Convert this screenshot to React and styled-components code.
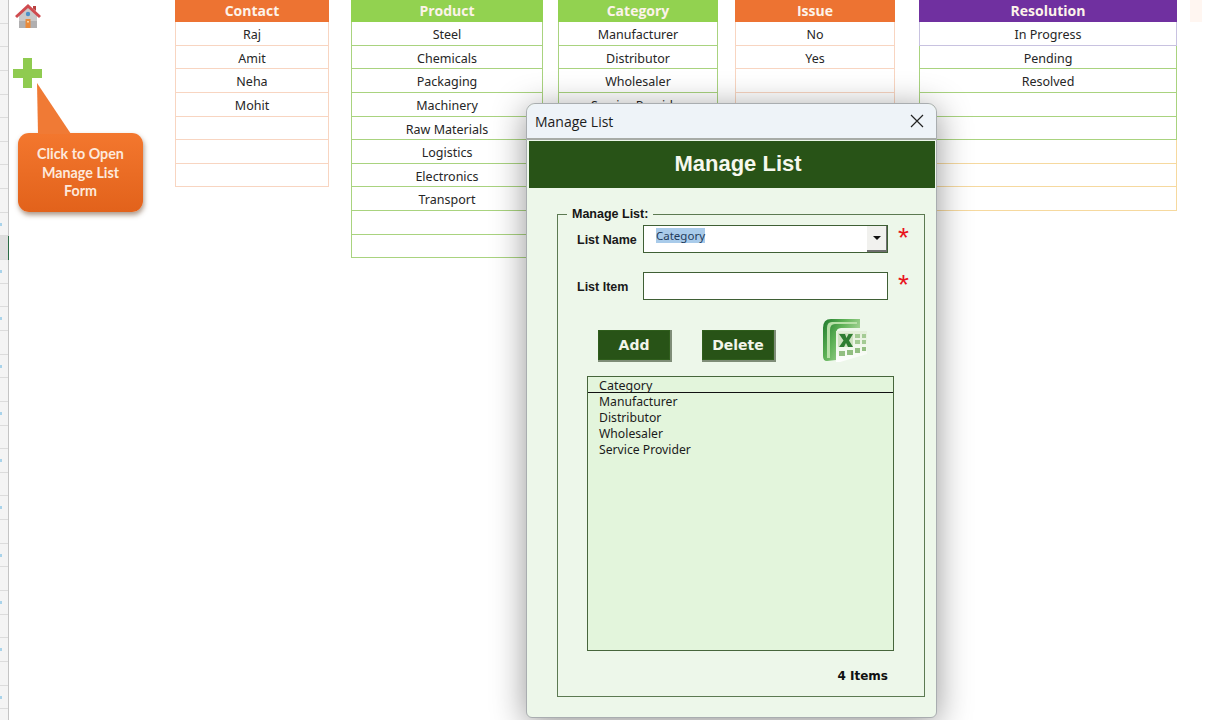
import React from "react";
import styled, { createGlobalStyle } from "styled-components";

const GlobalStyle = createGlobalStyle`
  html, body {
    margin: 0;
    background: #fff;
    overflow: hidden;
  }
`;

const ROW_H = 23.65;

const PEACH = "#f8d5c1";
const GREEN = "#a9d37f";
const LAVENDER = "#c8c2e0";
const SAND = "#f6d99f";

const tables = [
  {
    title: "Contact",
    head: "#ed7332",
    width: 154,
    left: 0,
    line: PEACH,
    items: ["Raj", "Amit", "Neha", "Mohit", "", "", ""],
  },
  {
    title: "Product",
    head: "#92d250",
    width: 192,
    left: 22,
    line: GREEN,
    items: ["Steel", "Chemicals", "Packaging", "Machinery", "Raw Materials", "Logistics", "Electronics", "Transport", "", ""],
  },
  {
    title: "Category",
    head: "#92d250",
    width: 160,
    left: 15,
    line: GREEN,
    items: ["Manufacturer", "Distributor", "Wholesaler", "Service Provider", "", "", "", ""],
  },
  {
    title: "Issue",
    head: "#ed7332",
    width: 160,
    left: 17,
    line: PEACH,
    items: ["No", "Yes", "", "", "", "", "", ""],
  },
  {
    title: "Resolution",
    head: "#7030a0",
    width: 258,
    left: 24,
    line: GREEN,
    lines: [LAVENDER, GREEN, GREEN, GREEN, GREEN, SAND, SAND, SAND],
    items: ["In Progress", "Pending", "Resolved", "", "", "", "", ""],
  },
];

const Page = styled.div`
  position: relative;
  display: flex;
  width: 1210px;
  height: 720px;
  overflow: hidden;
  background: #fff;
`;

const Gutter = styled.div`
  width: 8px;
  flex: none;
  background: #f4f4f4;
  border-right: 1px solid #c4c4c4;
`;

const GutterCell = styled.div`
  position: relative;
  height: ${ROW_H}px;
  box-sizing: border-box;
  border-bottom: 1px solid #dcdcdc;
  background: ${(p) => (p.$selected ? "#dedede" : "transparent")};
  box-shadow: ${(p) => (p.$selected ? "1px 0 0 #2b6b45" : "none")};
  &::after {
    content: "";
    display: ${(p) => (p.$tick ? "block" : "none")};
    position: absolute;
    left: 0;
    top: 10px;
    width: 2px;
    height: 3px;
    background: #a9d3ea;
  }
`;

const Tools = styled.div`
  width: 166px;
  flex: none;
  display: flex;
  flex-direction: column;
  align-items: flex-start;
`;

const HomeIcon = styled.svg`
  width: 28px;
  height: 26px;
  margin: 3px 0 0 5px;
`;

const PlusIcon = styled.svg`
  width: 31px;
  height: 32px;
  margin: 28px 0 0 3px;
`;

const Callout = styled.div`
  position: relative;
  width: 125px;
  height: 79px;
  margin: 44px 0 0 9px;
  box-sizing: border-box;
  padding-top: 12px;
  border-radius: 11px;
  background: linear-gradient(180deg, #f3772e 0%, #e2621b 100%);
  box-shadow: 1px 3px 5px rgba(90, 50, 20, 0.5);
  color: #fde9dc;
  font: 700 14.3px/18.7px Lato, "Liberation Sans", sans-serif;
  text-align: center;
`;

const CalloutTail = styled.svg`
  position: absolute;
  left: 18px;
  top: -50px;
  width: 36px;
  height: 51px;
`;

const Sheet = styled.div`
  display: flex;
  align-items: flex-start;
`;

const Column = styled.div`
  width: ${(p) => p.$width}px;
  margin-left: ${(p) => p.$left}px;
  flex: none;
`;

const ColumnHead = styled.div`
  height: 22px;
  background: ${(p) => p.$color};
  color: #fdf3ea;
  font: 700 14px/22px "Open Sans", "Liberation Sans", sans-serif;
  text-align: center;
`;

const Cell = styled.div`
  height: ${ROW_H}px;
  box-sizing: border-box;
  border: 1px solid ${(p) => p.$line};
  border-top: 0;
  color: #262626;
  font: 400 12.5px/25px "Noto Sans", "Liberation Sans", sans-serif;
  text-align: center;
`;

const GhostHead = styled.div`
  width: 12px;
  height: 22px;
  margin-left: 13px;
  background: #fff6f1;
`;

const Dialog = styled.div`
  position: absolute;
  left: 526px;
  top: 103px;
  width: 411px;
  height: 615px;
  box-sizing: border-box;
  display: flex;
  flex-direction: column;
  border: 1px solid #a9adb0;
  border-radius: 9px 9px 6px 6px;
  background: #edf7ea;
  box-shadow: 0 6px 34px rgba(0, 0, 0, 0.42);
`;

const TitleBar = styled.div`
  height: 34px;
  flex: none;
  display: flex;
  align-items: center;
  justify-content: space-between;
  padding: 0 12px 0 8px;
  border-radius: 9px 9px 0 0;
  border-bottom: 2px solid #a7aba7;
  background: #eef3f8;
  color: #1c1c1c;
  font: 400 14px "Open Sans", "Liberation Sans", sans-serif;
`;

const CloseIcon = styled.svg`
  width: 14px;
  height: 14px;
`;

const Body = styled.div`
  flex: 1;
  display: flex;
  flex-direction: column;
  margin: 1px 1px 0 2px;
  min-height: 0;
`;

const Banner = styled.div`
  height: 47px;
  flex: none;
  padding-left: 12px;
  background: #285317;
  color: #f6f8ee;
  font: 700 22px/46px "Liberation Sans", Arial, sans-serif;
  text-align: center;
`;

const Group = styled.fieldset`
  height: 490px;
  box-sizing: border-box;
  margin: 19px 10px 0 28px;
  padding: 4px 0 0 19px;
  border: 1px solid #5c7a52;
`;

const GroupTitle = styled.legend`
  margin-left: -10px;
  padding: 0 5px 0 5px;
  color: #151515;
  font: 700 12.5px/14px "Liberation Sans", Arial, sans-serif;
`;

const FieldRow = styled.div`
  display: grid;
  grid-template-columns: 66px 245px 20px;
  align-items: center;
  height: 28px;
  margin-bottom: ${(p) => p.$gap}px;
`;

const FieldLabel = styled.label`
  padding-top: 2px;
  color: #1a1a1a;
  font: 700 12.5px "Liberation Sans", Arial, sans-serif;
  white-space: nowrap;
`;

const Box = styled.div`
  position: relative;
  height: 28px;
  box-sizing: border-box;
  border: 1px solid #3f5f35;
  background: #fff;
  padding: 2px 0 0 12px;
`;

const Selected = styled.span`
  display: inline-block;
  vertical-align: top;
  background: #a9cbea;
  color: #1f3b5c;
  font: 400 11.5px/15px "Noto Sans", "Liberation Sans", sans-serif;
`;

const DropButton = styled.div`
  position: absolute;
  right: 0;
  top: 0;
  bottom: 0;
  width: 20px;
  display: flex;
  align-items: center;
  justify-content: center;
  box-sizing: border-box;
  border-right: 1px solid #6e6e6e;
  border-bottom: 2px solid #6e6e6e;
  background: #f1f1ee;
  &::after {
    content: "";
    border-left: 4px solid transparent;
    border-right: 4px solid transparent;
    border-top: 4px solid #111;
  }
`;

const Required = styled.span`
  align-self: start;
  justify-self: end;
  margin: -1px -1px 0 0;
  height: 24px;
  color: #e8141c;
  font: 400 28px/28px "Liberation Sans", Arial, sans-serif;
`;

const Actions = styled.div`
  display: flex;
  align-items: flex-start;
  height: 76px;
  padding-left: 21px;
`;

const ActionButton = styled.button`
  width: 74px;
  height: 32px;
  margin: 30px 30px 0 0;
  padding: 0;
  box-sizing: border-box;
  border: 0;
  border-right: 2px solid #7f8d78;
  border-bottom: 2px solid #7f8d78;
  background: #285317;
  box-shadow: inset 0 0 0 1px #2f5d1c;
  color: #f2f5ea;
  font: 700 14px "DejaVu Sans", Verdana, sans-serif;
`;

const ExcelIcon = styled.svg`
  width: 46px;
  height: 46px;
  margin: 18px 0 0 16px;
`;

const ListBox = styled.div`
  width: 307px;
  height: 275px;
  box-sizing: border-box;
  margin-left: 10px;
  border: 1px solid #47663c;
  background: #e3f5dc;
  color: #1b1b1b;
  font: 400 12.2px/16px "Noto Sans", "Liberation Sans", sans-serif;
`;

const ListHead = styled.div`
  height: 15px;
  margin-bottom: 1px;
  padding-left: 11px;
  border-bottom: 1px solid #111;
  font-size: 12.5px;
  line-height: 17px;
`;

const ListItem = styled.div`
  height: 16px;
  padding-left: 11px;
`;

const ItemCount = styled.div`
  margin: 17px 36px 0 0;
  color: #111;
  font: 700 12px/16px "DejaVu Sans", Verdana, sans-serif;
  text-align: right;
`;

const House = () => (
  <HomeIcon viewBox="0 0 28 26">
    <path d="M5 12 L14 4 L23 12 V25 H5 Z" fill="#c9c8c8" />
    <path d="M5 18 H23 V25 H5 Z" fill="#b0afb0" />
    <path d="M1 13 L14 1 L27 13 L25 15 L14 5 L3 15 Z" fill="#cf4b4f" />
    <path d="M19 3 H22 V8 L19 5.5 Z" fill="#b8403f" />
    <circle cx="14" cy="11" r="2.2" fill="#4a90c8" />
    <rect x="11.5" y="16" width="5" height="9" fill="#e98a3a" />
    <rect x="13" y="18" width="2" height="1.5" fill="#f9d8a8" />
  </HomeIcon>
);

const Plus = () => (
  <PlusIcon viewBox="0 0 31 32">
    <path d="M11 1 H20 V12 H30 V21 H20 V31 H11 V21 H1 V12 H11 Z" fill="#8fcb50" />
  </PlusIcon>
);

const Excel = () => (
  <ExcelIcon viewBox="0 0 46 46">
    <defs>
      <linearGradient id="xlBody" x1="0" y1="0" x2="1" y2="0.6">
        <stop offset="0" stopColor="#1f7a2c" />
        <stop offset="0.45" stopColor="#5fb257" />
        <stop offset="1" stopColor="#bfe0ae" />
      </linearGradient>
      <linearGradient id="xlSheet" x1="0" y1="0" x2="0" y2="1">
        <stop offset="0" stopColor="#e3efd9" />
        <stop offset="1" stopColor="#ffffff" />
      </linearGradient>
    </defs>
    <path d="M9 1 H38 V10 H19 Q14 10 14 16 V42 L5 43 Q1 43 1 38 V10 Q1 1 9 1 Z" fill="url(#xlBody)" />
    <path d="M5 10 Q5 4 10 4 H35 V6 H13 Q8 6 8 12 V40 H5 Z" fill="#b8e0a8" />
    <path d="M14 13 H45 V36 L18 44 H14 Z" fill="url(#xlSheet)" />
    <path d="M16 15 H31 V29 H16 Z" fill="#cfe2c1" />
    <path d="M17 16 H23 L24.5 20 L26.5 16 H31 L27 22.5 L31 29 H26 L24 25 L22 29 H17 L21.5 22.5 Z" fill="#2f7d32" />
    <path d="M33 16 H38 V20 H33 Z M40 16 H44 V20 H40 Z M33 22 H38 V26 H33 Z M40 22 H44 V26 H40 Z" fill="#a4cb94" />
    <path d="M17 33 H23 V38 H17 Z M25 32 H31 V37 H25 Z M33 30 H38 V35 H33 Z M40 29 H44 V33 H40 Z" fill="#93bf82" />
  </ExcelIcon>
);

const gutterRows = Array.from({ length: 31 }, (_, i) => i);

const App = () => (
  <Page>
    <GlobalStyle />
    <Gutter>
      {gutterRows.map((i) => (
        <GutterCell key={i} $selected={i === 10} $tick={i > 8 && i % 2 === 1} />
      ))}
    </Gutter>
    <Tools>
      <House />
      <Plus />
      <Callout>
        <CalloutTail viewBox="0 0 36 51">
          <path d="M1 0 L2 51 H35 Z" fill="#f07a35" />
        </CalloutTail>
        Click to Open
        <br />
        Manage List
        <br />
        Form
      </Callout>
    </Tools>
    <Sheet>
      {tables.map((t) => (
        <Column key={t.title} $width={t.width} $left={t.left}>
          <ColumnHead $color={t.head}>{t.title}</ColumnHead>
          {t.items.map((item, i) => (
            <Cell key={i} $line={t.lines ? t.lines[i] : t.line}>
              {item}
            </Cell>
          ))}
        </Column>
      ))}
      <GhostHead />
    </Sheet>
    <Dialog>
      <TitleBar>
        Manage List
        <CloseIcon viewBox="0 0 14 14">
          <path d="M1 1 L13 13 M13 1 L1 13" stroke="#222" strokeWidth="1.2" />
        </CloseIcon>
      </TitleBar>
      <Body>
        <Banner>Manage List</Banner>
        <Group>
          <GroupTitle>Manage List:</GroupTitle>
          <FieldRow $gap={19}>
            <FieldLabel>List Name</FieldLabel>
            <Box>
              <Selected>Category</Selected>
              <DropButton />
            </Box>
            <Required>*</Required>
          </FieldRow>
          <FieldRow $gap={0}>
            <FieldLabel>List Item</FieldLabel>
            <Box />
            <Required>*</Required>
          </FieldRow>
          <Actions>
            <ActionButton>Add</ActionButton>
            <ActionButton>Delete</ActionButton>
            <Excel />
          </Actions>
          <ListBox>
            <ListHead>Category</ListHead>
            <ListItem>Manufacturer</ListItem>
            <ListItem>Distributor</ListItem>
            <ListItem>Wholesaler</ListItem>
            <ListItem>Service Provider</ListItem>
          </ListBox>
          <ItemCount>4 Items</ItemCount>
        </Group>
      </Body>
    </Dialog>
  </Page>
);

export default App;
